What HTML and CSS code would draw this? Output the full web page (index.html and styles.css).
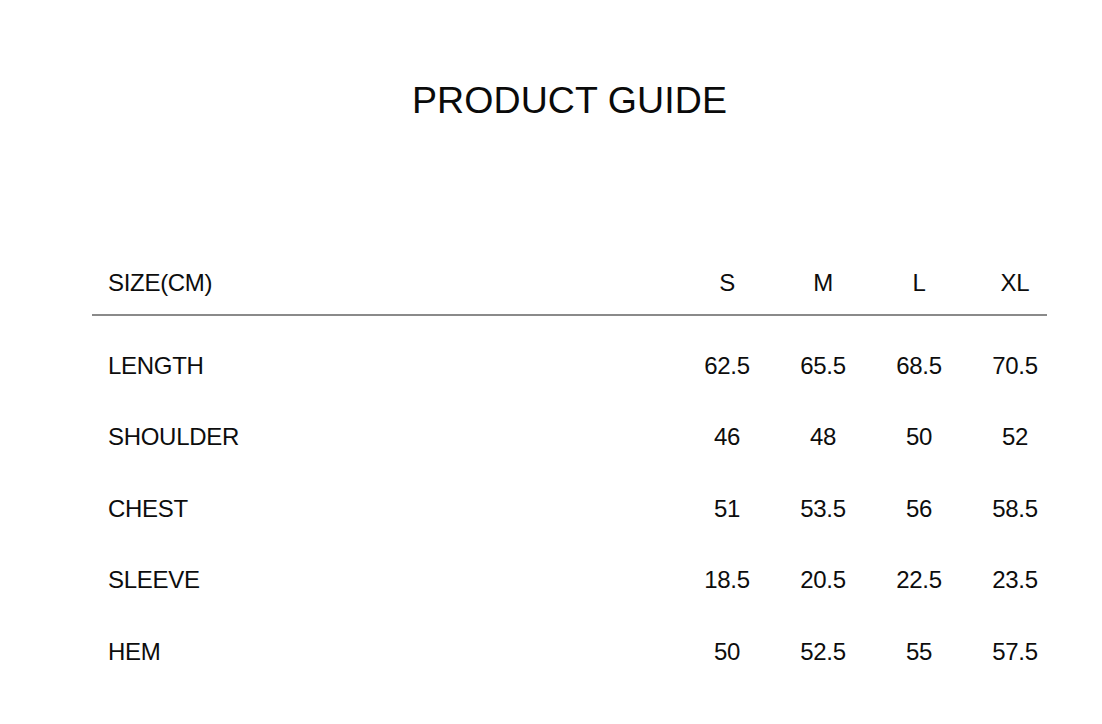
FILE: index.html
```html
<!DOCTYPE html>
<html lang="en">
<head>
<meta charset="utf-8">
<title>Product Guide</title>
<link rel="stylesheet" href="styles.css">
</head>
<body>
<main class="guide">
  <h1 class="guide-title">PRODUCT GUIDE</h1>
  <div class="size-table">
    <div class="row head">
      <div class="label">SIZE(CM)</div>
      <div class="cell">S</div>
      <div class="cell">M</div>
      <div class="cell">L</div>
      <div class="cell">XL</div>
    </div>
    <div class="body">
      <div class="row">
        <div class="label">LENGTH</div>
        <div class="cell">62.5</div>
        <div class="cell">65.5</div>
        <div class="cell">68.5</div>
        <div class="cell">70.5</div>
      </div>
      <div class="row">
        <div class="label">SHOULDER</div>
        <div class="cell">46</div>
        <div class="cell">48</div>
        <div class="cell">50</div>
        <div class="cell">52</div>
      </div>
      <div class="row">
        <div class="label">CHEST</div>
        <div class="cell">51</div>
        <div class="cell">53.5</div>
        <div class="cell">56</div>
        <div class="cell">58.5</div>
      </div>
      <div class="row">
        <div class="label">SLEEVE</div>
        <div class="cell">18.5</div>
        <div class="cell">20.5</div>
        <div class="cell">22.5</div>
        <div class="cell">23.5</div>
      </div>
      <div class="row">
        <div class="label">HEM</div>
        <div class="cell">50</div>
        <div class="cell">52.5</div>
        <div class="cell">55</div>
        <div class="cell">57.5</div>
      </div>
    </div>
  </div>
</main>
</body>
</html>
```

FILE: styles.css
```css
html, body {
  margin: 0;
  padding: 0;
  background: #ffffff;
}

body {
  font-family: "Liberation Sans", Arial, sans-serif;
  color: #0d0d0d;
}

.guide {
  padding: 78px 55px 0 92px;
}

.guide-title {
  margin: 0;
  font-size: 37.5px;
  line-height: 44px;
  font-weight: 400;
  letter-spacing: 0.1px;
  text-align: center;
  color: #0a0a0a;
}

.size-table {
  margin-top: 149px;
}

.row {
  display: grid;
  grid-template-columns: 1fr repeat(4, 64px);
  column-gap: 32px;
  padding: 0 0 0 16px;
  font-size: 24px;
  line-height: 24px;
  letter-spacing: -0.3px;
}

.row.head {
  padding-bottom: 19px;
  border-bottom: 2px solid #8a8a8a;
}

.body {
  padding-top: 14px;
}

.body .row {
  padding-top: 23.75px;
  padding-bottom: 23.75px;
}

.cell {
  text-align: center;
}
```
